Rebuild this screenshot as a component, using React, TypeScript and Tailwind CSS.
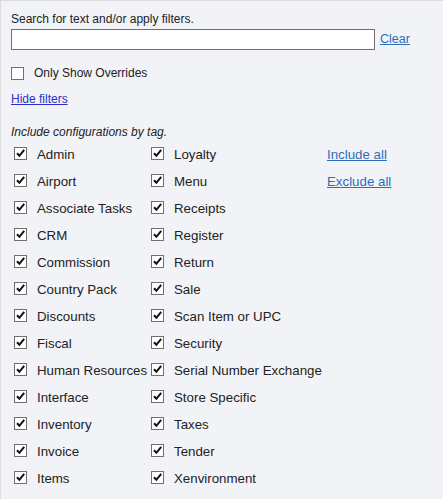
const leftTags = [
  "Admin",
  "Airport",
  "Associate Tasks",
  "CRM",
  "Commission",
  "Country Pack",
  "Discounts",
  "Fiscal",
  "Human Resources",
  "Interface",
  "Inventory",
  "Invoice",
  "Items",
];

const rightTags = [
  "Loyalty",
  "Menu",
  "Receipts",
  "Register",
  "Return",
  "Sale",
  "Scan Item or UPC",
  "Security",
  "Serial Number Exchange",
  "Store Specific",
  "Taxes",
  "Tender",
  "Xenvironment",
];

const Box = ({ checked }: { checked: boolean }) => (
  <span className="relative inline-block w-[13px] h-[13px] shrink-0 border border-[#707070] bg-white">
    {checked && (
      <svg
        viewBox="0 0 11 11"
        className="absolute left-0 top-0 w-[11px] h-[11px]"
        aria-hidden="true"
      >
        <path d="M2 5.2 L4.4 7.8 L9.2 1.8" fill="none" stroke="#111" strokeWidth="2" />
      </svg>
    )}
  </span>
);

const TagRow = ({ label }: { label: string }) => (
  <label className="flex items-center h-[27px] gap-[10px] text-[13.3px] text-[#222]">
    <span className="-mt-[3px] flex">
      <Box checked />
    </span>
    <span className="whitespace-nowrap">{label}</span>
  </label>
);

export default function App() {
  return (
    <div
      className="w-[443px] h-[499px] bg-[#f2f3f7] border-t border-l border-[#dcdcdc] text-[#222] overflow-hidden"
      style={{ fontFamily: '"Liberation Sans", Arial, sans-serif' }}
    >
      <div className="pl-[10px] pt-[11px]">
        <div className="text-[12px] leading-[14px]">Search for text and/or apply filters.</div>
        <div className="flex items-center mt-[3px]">
          <input
            type="text"
            className="w-[364px] h-[21px] bg-white border border-[#707070] outline-none"
          />
          <a href="#" className="ml-[5px] text-[12.5px] text-[#2a6ebb] underline">
            Clear
          </a>
        </div>

        <label className="flex items-center gap-[10px] mt-[14px] text-[12px]">
          <Box checked={false} />
          <span>Only Show Overrides</span>
        </label>

        <a href="#" className="block mt-[10px] text-[12px] leading-[14px] text-[#2f2fc8] underline">
          Hide filters
        </a>

        <div className="mt-[19px] text-[12px] leading-[14px] italic">
          Include configurations by tag.
        </div>

        <div className="flex mt-[2px] pl-[3px]">
          <div className="w-[137px]">
            {leftTags.map((t) => (
              <TagRow key={t} label={t} />
            ))}
          </div>
          <div className="w-[176px]">
            {rightTags.map((t) => (
              <TagRow key={t} label={t} />
            ))}
          </div>
          <div className="text-[13.3px]">
            <div className="h-[27px] flex items-center">
              <a href="#" className="text-[#2a6ebb] underline">
                Include all
              </a>
            </div>
            <div className="h-[27px] flex items-center">
              <a href="#" className="text-[#2a6ebb] underline">
                Exclude all
              </a>
            </div>
          </div>
        </div>
      </div>
    </div>
  );
}
